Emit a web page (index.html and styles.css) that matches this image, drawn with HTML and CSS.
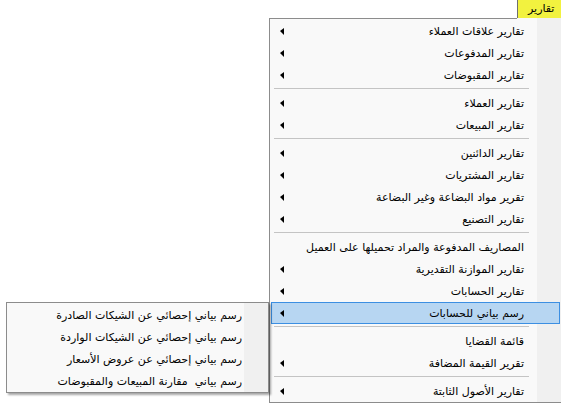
FILE: index.html
```html
<!DOCTYPE html>
<html lang="ar">
	<head>
		<meta charset="UTF-8">
		<meta name="viewport" content="width=device-width, initial-scale=1.0">
		<title>تقارير</title>
		<link rel="stylesheet" href="styles.css">
	</head>
	<body>
		<div class="menubar">
			<span class="menubarItem open">تقارير</span>
		</div>

		<div class="menu mainMenu">
			<div class="menuItem hasSub"><span class="label">تقارير علاقات العملاء</span><span class="arrow"></span></div>
			<div class="menuItem hasSub"><span class="label">تقارير المدفوعات</span><span class="arrow"></span></div>
			<div class="menuItem hasSub"><span class="label">تقارير المقبوضات</span><span class="arrow"></span></div>
			<div class="separator"></div>
			<div class="menuItem hasSub"><span class="label">تقارير العملاء</span><span class="arrow"></span></div>
			<div class="menuItem hasSub"><span class="label">تقارير المبيعات</span><span class="arrow"></span></div>
			<div class="separator"></div>
			<div class="menuItem hasSub"><span class="label">تقارير الدائنين</span><span class="arrow"></span></div>
			<div class="menuItem hasSub"><span class="label">تقارير المشتريات</span><span class="arrow"></span></div>
			<div class="menuItem hasSub"><span class="label">تقرير مواد البضاعة وغير البضاعة</span><span class="arrow"></span></div>
			<div class="menuItem hasSub"><span class="label">تقارير التصنيع</span><span class="arrow"></span></div>
			<div class="separator"></div>
			<div class="menuItem"><span class="label">المصاريف المدفوعة والمراد تحميلها على العميل</span></div>
			<div class="menuItem hasSub"><span class="label">تقارير الموازنة التقديرية</span><span class="arrow"></span></div>
			<div class="menuItem hasSub"><span class="label">تقارير الحسابات</span><span class="arrow"></span></div>
			<div class="menuItem hasSub active"><span class="label">رسم بياني للحسابات</span><span class="arrow"></span></div>
			<div class="separator"></div>
			<div class="menuItem"><span class="label">قائمة القضايا</span></div>
			<div class="menuItem hasSub"><span class="label">تقرير القيمة المضافة</span><span class="arrow"></span></div>
			<div class="separator"></div>
			<div class="menuItem hasSub"><span class="label">تقارير الأصول الثابتة</span><span class="arrow"></span></div>
		</div>

		<div class="menu subMenu">
			<div class="menuItem"><span class="label">رسم بياني إحصائي عن الشيكات الصادرة</span></div>
			<div class="menuItem"><span class="label">رسم بياني إحصائي عن الشيكات الواردة</span></div>
			<div class="menuItem"><span class="label">رسم بياني إحصائي عن عروض الأسعار</span></div>
			<div class="menuItem"><span class="label">رسم بياني&nbsp; مقارنة المبيعات والمقبوضات</span></div>
		</div>
	</body>
</html>
```

FILE: styles.css
```css
*, html, body {
	box-sizing: border-box;
}

body {
	padding: 0;
	margin: 0;
	font-family: "DejaVu Sans", sans-serif;
	font-size: 11px;
	color: #000;
	background-color: #fff;
	overflow: hidden;
}

.menubar {
	height: 18px;
	display: flex;
	justify-content: flex-end;
}

.menubarItem {
	width: 44px;
	height: 18px;
	line-height: 17px;
	padding-left: 10px;
	background-color: #f2f23f;
	border-left: 1px solid #6f6f6f;
	direction: rtl;
	text-align: left;
	position: relative;
	z-index: 3;
}

/* dropdown boxes */
.menu {
	position: absolute;
	direction: rtl;
	border: 1px solid #8c8c8c;
	background-color: #f9f9f9;
}

.mainMenu {
	left: 269px;
	top: 18px;
	width: 293px;
	padding: 2px 1px 0;
	border-top: none;
	background: linear-gradient(to left, #f0f0f0 24px, #f9f9f9 24px);
}

.mainMenu::before {
	content: "";
	position: absolute;
	top: 0;
	left: -1px;
	right: 44px;
	height: 1px;
	background-color: #8c8c8c;
}

.subMenu {
	left: 6px;
	top: 302px;
	width: 263px;
	padding: 1px 1px 0;
	background: linear-gradient(to left, #f0f0f0 24px, #f9f9f9 24px);
	box-shadow: 2px 2px 2px rgba(0, 0, 0, 0.35);
	z-index: 2;
}

.menuItem {
	height: 22px;
	display: flex;
	align-items: center;
	border: 1px solid transparent;
	padding-right: 35px;
	padding-left: 8px;
	white-space: nowrap;
}

.subMenu .menuItem {
	padding-right: 24px;
}

.menuItem.active {
	background-color: #b7d6f2;
	border-color: #3c8fe2;
}

.arrow {
	margin-right: auto;
	width: 0;
	height: 0;
	border-top: 3px solid transparent;
	border-bottom: 4px solid transparent;
	border-right: 4px solid #000;
}

.separator {
	height: 6px;
	padding-top: 2px;
	margin-right: 31px;
	margin-left: 3px;
}

.separator::after {
	content: "";
	display: block;
	height: 1px;
	background-color: #c4c4c4;
}
```
